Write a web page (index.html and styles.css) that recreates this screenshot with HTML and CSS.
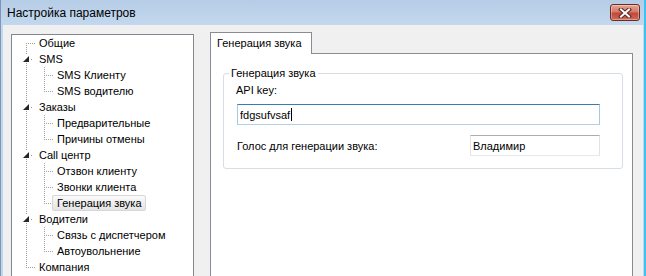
FILE: index.html
```html
<!DOCTYPE html>
<html lang="ru">
<head>
    <meta charset="utf-8">
    <title>Настройка параметров</title>
    <link rel="stylesheet" href="styles.css">
</head>
<body>

<div class="window">
    <div class="titlebar">
        <span class="title">Настройка параметров</span>
        <div class="close-btn">
            <svg width="14" height="10" viewBox="0 0 14 10">
                <path d="M3 1.5 L11 8.5 M11 1.5 L3 8.5" stroke="#5a2620" stroke-width="4" stroke-linecap="square"/>
                <path d="M3 1.5 L11 8.5 M11 1.5 L3 8.5" stroke="#fff" stroke-width="2" stroke-linecap="square"/>
            </svg>
        </div>
    </div>

    <div class="client">
        <div class="tree">
            <div class="row"><span class="g g-first"></span><span class="node">Общие</span></div>
            <div class="row"><span class="g g-exp"><svg width="18" height="16"><rect x="5" y="4" width="7" height="8" fill="#fff"/><path d="M11 5 L11 11 L5 11 Z" fill="#262626"/></svg></span><span class="node">SMS</span></div>
            <div class="row"><span class="g g-pipe"></span><span class="g g-tee"></span><span class="node">SMS Клиенту</span></div>
            <div class="row"><span class="g g-pipe"></span><span class="g g-ell"></span><span class="node">SMS водителю</span></div>
            <div class="row"><span class="g g-exp"><svg width="18" height="16"><rect x="5" y="4" width="7" height="8" fill="#fff"/><path d="M11 5 L11 11 L5 11 Z" fill="#262626"/></svg></span><span class="node">Заказы</span></div>
            <div class="row"><span class="g g-pipe"></span><span class="g g-tee"></span><span class="node">Предварительные</span></div>
            <div class="row"><span class="g g-pipe"></span><span class="g g-ell"></span><span class="node">Причины отмены</span></div>
            <div class="row"><span class="g g-exp"><svg width="18" height="16"><rect x="5" y="4" width="7" height="8" fill="#fff"/><path d="M11 5 L11 11 L5 11 Z" fill="#262626"/></svg></span><span class="node">Call центр</span></div>
            <div class="row"><span class="g g-pipe"></span><span class="g g-tee"></span><span class="node">Отзвон клиенту</span></div>
            <div class="row"><span class="g g-pipe"></span><span class="g g-tee"></span><span class="node">Звонки клиента</span></div>
            <div class="row"><span class="g g-pipe"></span><span class="g g-ell"></span><span class="node selected">Генерация звука</span></div>
            <div class="row"><span class="g g-exp"><svg width="18" height="16"><rect x="5" y="4" width="7" height="8" fill="#fff"/><path d="M11 5 L11 11 L5 11 Z" fill="#262626"/></svg></span><span class="node">Водители</span></div>
            <div class="row"><span class="g g-pipe"></span><span class="g g-tee"></span><span class="node">Связь с диспетчером</span></div>
            <div class="row"><span class="g g-pipe"></span><span class="g g-ell"></span><span class="node">Автоувольнение</span></div>
            <div class="row"><span class="g g-ell"></span><span class="node">Компания</span></div>
        </div>

        <div class="tabs">
            <div class="tab-strip">
                <div class="tab active">Генерация звука</div>
            </div>
            <div class="tab-page">
                <fieldset class="group">
                    <legend>Генерация звука</legend>
                    <div class="field-label">API key:</div>
                    <div class="textbox focused">fdgsufvsaf<span class="caret"></span></div>
                    <div class="field-row">
                        <span>Голос для генерации звука:</span>
                        <div class="textbox voice">Владимир</div>
                    </div>
                </fieldset>
            </div>
        </div>
    </div>
</div>

</body>
</html>
```

FILE: styles.css
```css
:root {
    --dots-v: repeating-linear-gradient(to bottom, #a0a0a0 0 1px, transparent 1px 2px);
    --dots-h: repeating-linear-gradient(to right, #a0a0a0 0 1px, transparent 1px 2px);
    --frame-color: #c0d6ee;
    --face-color: #f0f0f0;
}

* {
    box-sizing: border-box;
}

body {
    margin: 0;
    font-family: "Liberation Sans", Arial, sans-serif;
    font-size: 11px;
    color: #000;
}

.window {
    width: 646px;
    height: 276px;
    overflow: hidden;
    display: flex;
    flex-direction: column;
    background: linear-gradient(#b6cde7, #c3d8ee 25px, var(--frame-color));
    border-left: 1px solid #7d96b3;
    border-right: 2px solid #3cc3ef;
}

/* Title bar */
.titlebar {
    height: 25px;
    flex: none;
    display: flex;
    align-items: center;
    justify-content: space-between;
    padding: 0 4px 0 6px;
}

.title {
    font-size: 12px;
    color: #000;
}

.close-btn {
    width: 30px;
    height: 17px;
    border: 1px solid #6b2a22;
    border-radius: 3px;
    background: linear-gradient(#e5a595, #d47a68 45%, #c2473a 55%, #cf6a55);
    box-shadow: inset 0 0 0 1px rgba(255, 255, 255, 0.35);
    display: flex;
    align-items: center;
    justify-content: center;
}

/* Client area */
.client {
    flex: 1;
    min-height: 0;
    display: flex;
    align-items: flex-start;
    background: var(--face-color);
    margin: 0 1px 0 2px;
    padding: 7px 10px 0 8px;
}

/* Tree view */
.tree {
    flex: none;
    width: 183px;
    height: 300px;
    margin-top: 2px;
    border: 1px solid #828790;
    background: #fff;
    padding-left: 6px;
}

.row {
    display: flex;
    height: 16px;
}

.g {
    flex: none;
    width: 18px;
    height: 16px;
    background-repeat: no-repeat;
}

.g svg {
    display: block;
}

.g-pipe {
    background-image: var(--dots-v);
    background-size: 1px 16px;
    background-position: 8px 0;
}

.g-tee {
    background-image: var(--dots-v), var(--dots-h);
    background-size: 1px 16px, 10px 1px;
    background-position: 8px 0, 8px 8px;
}

.g-ell {
    background-image: var(--dots-v), var(--dots-h);
    background-size: 1px 9px, 10px 1px;
    background-position: 8px 0, 8px 8px;
}

.g-first {
    background-image: var(--dots-v), var(--dots-h);
    background-size: 1px 8px, 10px 1px;
    background-position: 8px 8px, 8px 8px;
}

.g-exp {
    background-image: var(--dots-v), var(--dots-h);
    background-size: 1px 16px, 1px 1px;
    background-position: 8px 0, 13px 8px;
}

.node {
    height: 16px;
    line-height: 14px;
    border: 1px solid transparent;
    border-radius: 2px;
    padding: 0 3px 0 4px;
    margin-left: -2px;
    white-space: nowrap;
}

.node.selected {
    border-color: #d6d6d6;
    background: linear-gradient(#fafafa, #e4e4e4);
}

/* Tab control */
.tabs {
    flex: none;
    width: 423px;
    height: 260px;
    margin-left: 16px;
    display: flex;
    flex-direction: column;
}

.tab-strip {
    display: flex;
    height: 21px;
    flex: none;
}

.tab {
    width: 102px;
    height: 22px;
    border: 1px solid #898c95;
    border-bottom: 0;
    background: #fff;
    padding-left: 6px;
    line-height: 20px;
    position: relative;
    z-index: 1;
}

.tab-page {
    flex: 1;
    border: 1px solid #898c95;
    background: #fff;
    padding: 12px 9px 0 12px;
}

.group {
    margin: 0;
    min-width: 0;
    border: 1px solid #d5dfe5;
    border-radius: 3px;
    padding: 4px 22px 12px 13px;
}

.group legend {
    padding: 0 2px;
    margin-left: -8px;
    line-height: 14px;
}

.field-label {
    line-height: 13px;
    margin-left: -1px;
}

.textbox {
    height: 21px;
    display: flex;
    align-items: center;
    border: 1px solid;
    border-color: #abadb3 #e2e3ea #e3e9ef #e2e3ea;
    background: #fff;
    padding: 0 2px;
}

.textbox.focused {
    margin-top: 7px;
    border-color: #3d7bad #a4c9e3 #b5cfe7 #a4c9e3;
}

.caret {
    width: 1px;
    height: 13px;
    background: #000;
    margin-left: 1px;
}

.field-row {
    display: flex;
    justify-content: space-between;
    align-items: center;
    margin-top: 10px;
}

.textbox.voice {
    width: 130px;
}
```
